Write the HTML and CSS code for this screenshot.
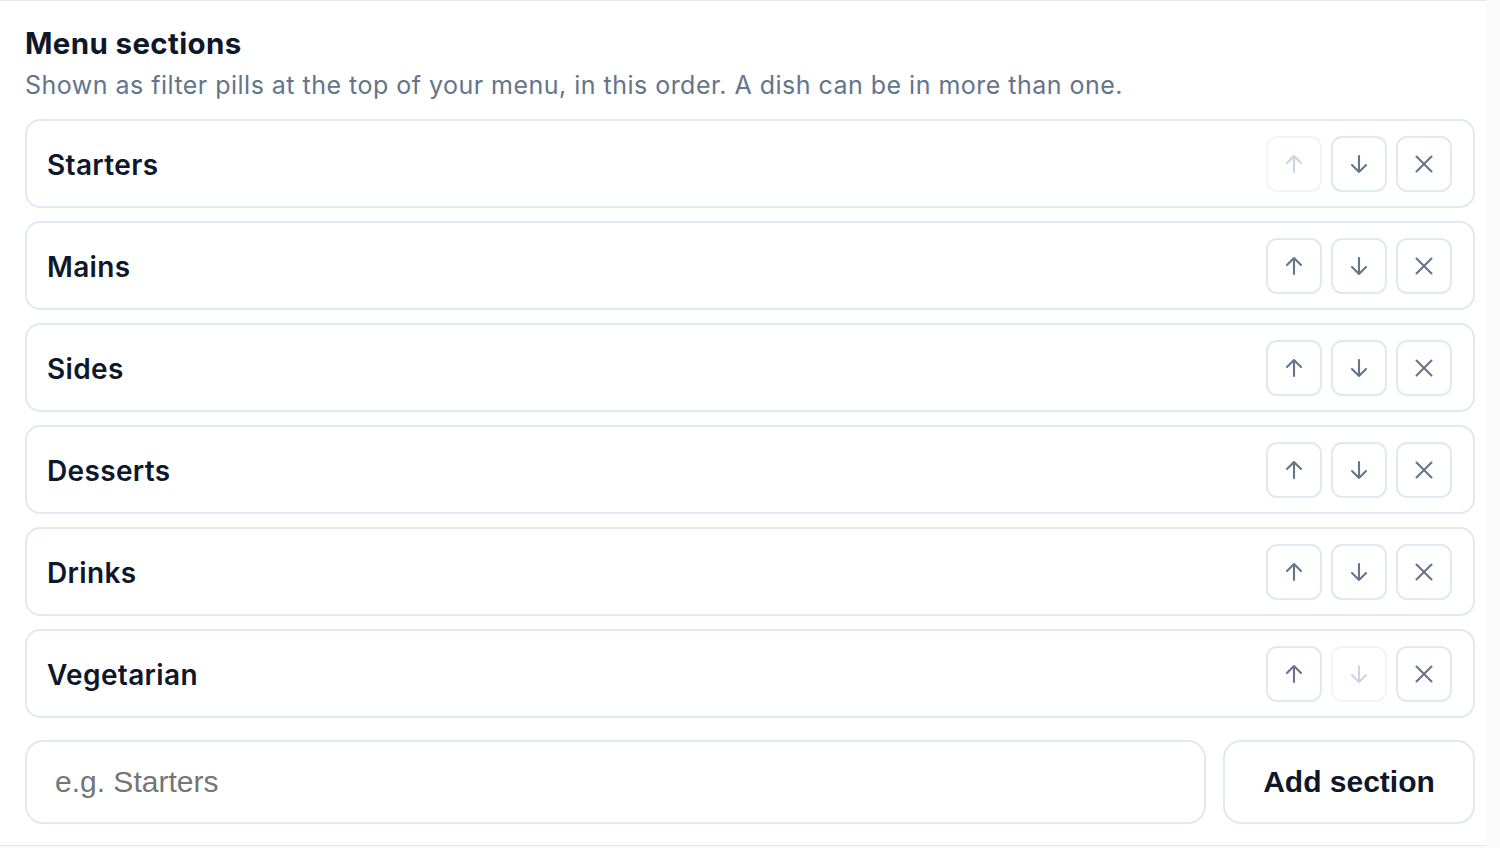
FILE: index.html
```html
<!DOCTYPE html>
<html lang="en">
<head>
    <meta charset="UTF-8">
    <meta name="viewport" content="width=device-width, initial-scale=1.0">
    <title>Menu sections</title>
    <link rel="stylesheet" href="styles.css">
</head>
<body>
    <div class="card">
        <h2 class="title">Menu sections</h2>
        <p class="hint">Shown as filter pills at the top of your menu, in this order. A dish can be in more than one.</p>

        <div class="section-list">
            <div class="section-row">
                <span class="section-name">Starters</span>
                <div class="row-actions">
                    <button class="icon-btn" disabled><svg viewBox="0 0 24 24"><path d="M12 20V4M5 11l7-7 7 7"/></svg></button>
                    <button class="icon-btn"><svg viewBox="0 0 24 24"><path d="M12 4v16M5 13l7 7 7-7"/></svg></button>
                    <button class="icon-btn"><svg viewBox="0 0 24 24"><path d="M4.5 4.5l15 15M19.5 4.5l-15 15"/></svg></button>
                </div>
            </div>
            <div class="section-row">
                <span class="section-name">Mains</span>
                <div class="row-actions">
                    <button class="icon-btn"><svg viewBox="0 0 24 24"><path d="M12 20V4M5 11l7-7 7 7"/></svg></button>
                    <button class="icon-btn"><svg viewBox="0 0 24 24"><path d="M12 4v16M5 13l7 7 7-7"/></svg></button>
                    <button class="icon-btn"><svg viewBox="0 0 24 24"><path d="M4.5 4.5l15 15M19.5 4.5l-15 15"/></svg></button>
                </div>
            </div>
            <div class="section-row">
                <span class="section-name">Sides</span>
                <div class="row-actions">
                    <button class="icon-btn"><svg viewBox="0 0 24 24"><path d="M12 20V4M5 11l7-7 7 7"/></svg></button>
                    <button class="icon-btn"><svg viewBox="0 0 24 24"><path d="M12 4v16M5 13l7 7 7-7"/></svg></button>
                    <button class="icon-btn"><svg viewBox="0 0 24 24"><path d="M4.5 4.5l15 15M19.5 4.5l-15 15"/></svg></button>
                </div>
            </div>
            <div class="section-row">
                <span class="section-name">Desserts</span>
                <div class="row-actions">
                    <button class="icon-btn"><svg viewBox="0 0 24 24"><path d="M12 20V4M5 11l7-7 7 7"/></svg></button>
                    <button class="icon-btn"><svg viewBox="0 0 24 24"><path d="M12 4v16M5 13l7 7 7-7"/></svg></button>
                    <button class="icon-btn"><svg viewBox="0 0 24 24"><path d="M4.5 4.5l15 15M19.5 4.5l-15 15"/></svg></button>
                </div>
            </div>
            <div class="section-row">
                <span class="section-name">Drinks</span>
                <div class="row-actions">
                    <button class="icon-btn"><svg viewBox="0 0 24 24"><path d="M12 20V4M5 11l7-7 7 7"/></svg></button>
                    <button class="icon-btn"><svg viewBox="0 0 24 24"><path d="M12 4v16M5 13l7 7 7-7"/></svg></button>
                    <button class="icon-btn"><svg viewBox="0 0 24 24"><path d="M4.5 4.5l15 15M19.5 4.5l-15 15"/></svg></button>
                </div>
            </div>
            <div class="section-row">
                <span class="section-name">Vegetarian</span>
                <div class="row-actions">
                    <button class="icon-btn"><svg viewBox="0 0 24 24"><path d="M12 20V4M5 11l7-7 7 7"/></svg></button>
                    <button class="icon-btn" disabled><svg viewBox="0 0 24 24"><path d="M12 4v16M5 13l7 7 7-7"/></svg></button>
                    <button class="icon-btn"><svg viewBox="0 0 24 24"><path d="M4.5 4.5l15 15M19.5 4.5l-15 15"/></svg></button>
                </div>
            </div>
        </div>

        <div class="add-row">
            <input type="text" class="add-input" placeholder="e.g. Starters">
            <button class="add-btn">Add section</button>
        </div>
    </div>
</body>
</html>
```

FILE: styles.css
```css
body {
    margin: 0;
    background-color: #fafafa;
    font-family: Inter, "Noto Sans", sans-serif;
    color: #0f172a;
}
.card {
    width: 1486px;
    height: 846px;
    box-sizing: border-box;
    background-color: white;
    border-top: 1px solid #e5e7eb;
    border-bottom: 1px solid #e5e7eb;
    padding: 24px 11px 0 25px;
}
.title {
    margin: 0;
    font-size: 29.5px;
    line-height: 36px;
    font-weight: 700;
    letter-spacing: 0.35px;
}
.hint {
    margin: 9px 0 0;
    font-size: 25px;
    line-height: 30px;
    letter-spacing: 0.48px;
    color: #64748b;
}
.section-list {
    display: flex;
    flex-direction: column;
    gap: 13px;
    margin-top: 19px;
}
.section-row {
    display: flex;
    align-items: center;
    justify-content: space-between;
    height: 89px;
    box-sizing: border-box;
    padding: 0 21px 0 20px;
    border: 2px solid #e2e8f0;
    border-radius: 15px;
}
.section-name {
    padding-top: 3px;
    font-size: 28px;
    font-weight: 600;
    letter-spacing: 0.35px;
}
.row-actions {
    display: flex;
    gap: 9px;
}
.icon-btn {
    width: 56px;
    height: 56px;
    display: flex;
    align-items: center;
    justify-content: center;
    padding: 0;
    background: white;
    border: 2px solid #e2e8f0;
    border-radius: 11px;
    color: #64748b;
    cursor: pointer;
}
.icon-btn svg {
    width: 24px;
    height: 24px;
    fill: none;
    stroke: currentColor;
    stroke-width: 2.1;
    stroke-linecap: round;
    stroke-linejoin: round;
}
.icon-btn:disabled {
    border-color: #f1f5f9;
    color: #cbd5e1;
    cursor: default;
}
.add-row {
    display: flex;
    gap: 17px;
    margin-top: 22px;
}
.add-input {
    flex: 1;
    height: 84px;
    box-sizing: border-box;
    padding: 0 28px;
    border: 2px solid #e2e8f0;
    border-radius: 18px;
    font-family: "Liberation Sans", Arial, sans-serif;
    font-size: 30px;
    color: #0f172a;
    outline: none;
}
.add-input::placeholder {
    color: #757575;
}
.add-btn {
    width: 252px;
    height: 84px;
    background: white;
    border: 2px solid #e2e8f0;
    border-radius: 18px;
    font-family: "Liberation Sans", Arial, sans-serif;
    font-size: 30px;
    font-weight: 700;
    color: #0f172a;
    cursor: pointer;
}
```
